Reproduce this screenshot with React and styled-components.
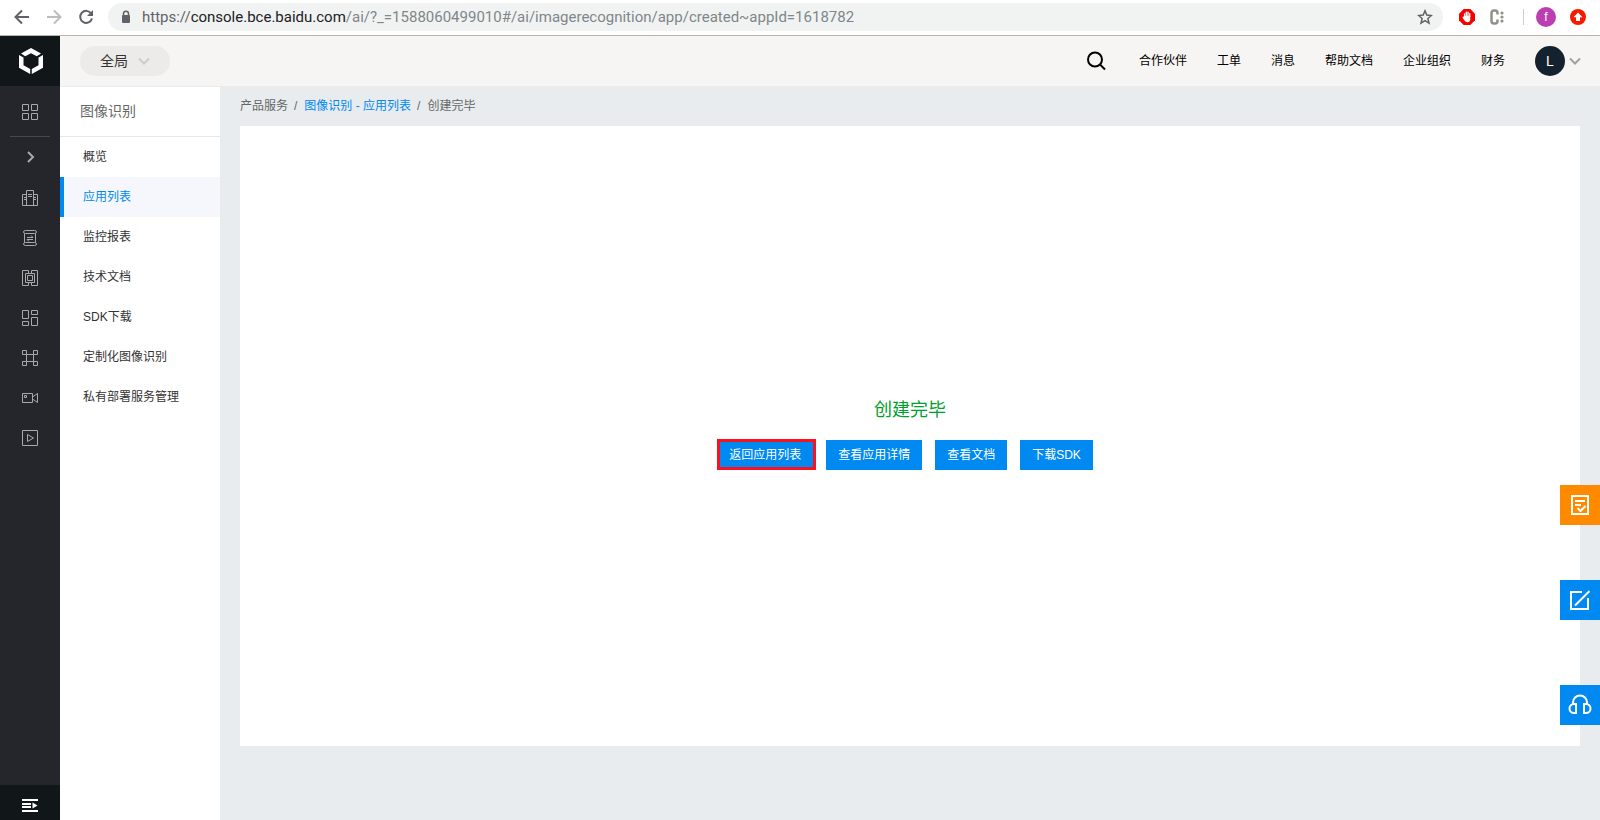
import React from "react";
import styled, { createGlobalStyle } from "styled-components";

const GlobalStyle = createGlobalStyle`
  *, *::before, *::after { box-sizing: border-box; }
  body {
    margin: 0;
    background: #e8ecef;
    color: #333;
    font-family: "Liberation Sans", "Noto Sans CJK SC", sans-serif;
    font-size: 12px;
    line-height: 20px;
  }
  button { font: inherit; border: 0; padding: 0; background: none; cursor: pointer; }
  a { color: inherit; text-decoration: none; }
  ul, ol { list-style: none; margin: 0; padding: 0; }
  svg { display: block; flex: none; }
`;

const Page = styled.div`
  display: flex;
  flex-direction: column;
  min-height: 100vh;
`;

/* Browser chrome */
const BrowserBar = styled.div`
  display: flex;
  align-items: center;
  height: 36px;
  padding: 0 14px 2px;
  background: #fff;
  border-bottom: 1px solid #bab4ae;
`;

const BrowserButtons = styled.div`
  display: flex;
  gap: 16px;
  margin-right: 14px;
`;

const IconButton = styled.button`
  display: flex;
  align-items: center;
  justify-content: center;
  width: ${(p) => p.$size || 16}px;
  height: ${(p) => p.$size || 16}px;
`;

const AddressBar = styled.div`
  flex: 1;
  display: flex;
  align-items: center;
  gap: 10px;
  height: 28px;
  padding: 0 10px 0 12px;
  border-radius: 14px;
  background: #f1f3f2;
`;

const Address = styled.span`
  flex: 1;
  font-family: Roboto, "Open Sans", sans-serif;
  font-size: 15px;
  color: #80868b;
  white-space: nowrap;
  b { font-weight: 400; color: #202124; }
  i { font-style: normal; color: #5f6368; }
`;

const Extensions = styled.div`
  display: flex;
  align-items: center;
  gap: 14px;
  margin-left: 16px;
`;

const ExtDivider = styled.span`
  width: 1px;
  height: 16px;
  margin: 0 -2px 0 4px;
  background: #cfcfcf;
`;

const Profile = styled.button`
  && {
    width: 20px;
    height: 20px;
    border-radius: 50%;
    background: #bc3fb2;
    color: #fff;
    font-size: 12px;
  }
`;

/* Console */
const Console = styled.div`
  flex: 1;
  display: flex;
`;

const Rail = styled.nav`
  flex: none;
  display: flex;
  flex-direction: column;
  width: 60px;
  background: #25262c;
  color: #a9a9ab;
`;

const Logo = styled.a`
  display: flex;
  align-items: center;
  justify-content: center;
  height: 50px;
  padding-left: 2px;
  background: #111618;
  color: #fff;
`;

const RailTop = styled.div`
  display: flex;
  justify-content: center;
  height: 51px;
  margin: 0 10px;
  border-bottom: 1px solid #46474c;
`;

const RailButton = styled.button`
  display: flex;
  align-items: center;
  justify-content: center;
  width: 100%;
  height: 40px;
  padding-top: 2px;
  color: inherit;
  ${RailTop} & { height: 50px; }
`;

const RailToggle = styled(RailButton)`
  height: 35px;
  margin-top: auto;
  padding-top: 4px;
  background: #111618;
  color: #fff;
`;

const Body = styled.div`
  flex: 1;
  display: flex;
  flex-direction: column;
  min-width: 0;
`;

const Header = styled.header`
  display: flex;
  align-items: center;
  height: 50px;
  padding: 0 19px 0 20px;
  background: #f6f5f3;
`;

const RegionButton = styled.button`
  && {
    display: flex;
    align-items: center;
    justify-content: space-between;
    width: 90px;
    height: 30px;
    padding: 0 20px;
    border-radius: 15px;
    background: #ecebe9;
    color: #333;
    font-size: 14px;
  }
`;

const SearchButton = styled(IconButton)`
  margin-right: 3px;
`;

const HeaderNav = styled.nav`
  display: flex;
  align-items: center;
  gap: 30px;
  margin-left: auto;
  color: #000;
`;

const Account = styled.button`
  && {
    display: flex;
    align-items: center;
    gap: 4px;
  }
`;

const Avatar = styled.span`
  width: 30px;
  height: 30px;
  border-radius: 50%;
  background: #13222e;
  color: #fff;
  font-size: 14px;
  line-height: 30px;
  text-align: center;
`;

const Content = styled.div`
  flex: 1;
  display: flex;
`;

const Sidebar = styled.aside`
  flex: none;
  width: 160px;
  background: #fff;
  border-top: 1px solid #e8ecef;
`;

const SidebarTitle = styled.h2`
  margin: 0;
  height: 50px;
  padding: 0 20px;
  border-bottom: 1px solid #e8e9eb;
  color: #666;
  font-size: 14px;
  font-weight: 400;
  line-height: 48px;
`;

const SidebarLink = styled.a`
  display: block;
  padding-left: 19px;
  border-left: 4px solid ${(p) => (p.$active ? "#0089f0" : "transparent")};
  background: ${(p) => (p.$active ? "#f5f7fc" : "transparent")};
  color: ${(p) => (p.$active ? "#0089f0" : "#333")};
  line-height: 40px;
`;

const Main = styled.main`
  flex: 1;
  min-width: 0;
  padding: 0 20px 20px;
`;

const Breadcrumb = styled.ol`
  display: flex;
  align-items: center;
  height: 40px;
  color: #666;
  li + li::before { content: "/"; margin: 0 7px 0 6px; }
  a { color: #0089f0; }
`;

const Card = styled.section`
  display: flex;
  flex-direction: column;
  align-items: center;
  justify-content: center;
  min-height: 620px;
  padding-bottom: 8px;
  background: #fff;
`;

const ResultTitle = styled.h1`
  margin: 0 0 15px;
  color: #00a02c;
  font-size: 18px;
  font-weight: 400;
  line-height: 30px;
`;

const Actions = styled.div`
  display: flex;
  gap: 13px;
  padding-right: 10px;
`;

const ActionButton = styled.button`
  && {
    position: relative;
    height: 30px;
    padding: 0 12px;
    background: #0089f0;
    color: #fff;
  }
  ${(p) =>
    p.$marked &&
    `&::after {
      content: "";
      position: absolute;
      inset: -1px -3px 0 0;
      border: 3px solid #fb1220;
    }`}
`;

const FloatingTools = styled.div`
  position: fixed;
  right: 0;
  bottom: 95px;
  display: flex;
  flex-direction: column;
`;

const FloatingButton = styled.button`
  && {
    display: flex;
    align-items: center;
    justify-content: center;
    width: 40px;
    height: 40px;
    background: ${(p) => (p.$warm ? "#ff8a00" : "#0089f0")};
    color: #fff;
  }
  & + & { margin-top: 65px; }
  &:first-child { margin-bottom: -10px; }
`;

function Line({ children, size = 16, width = 1, ...rest }) {
  return (
    <svg
      width={size}
      height={size}
      viewBox={`0 0 ${size} ${size}`}
      fill="none"
      stroke="currentColor"
      strokeWidth={width}
      aria-hidden="true"
      {...rest}
    >
      {children}
    </svg>
  );
}

const Chevron = ({ color }) => (
  <Line size={12} width={2} stroke={color}>
    <path d="M1 3.500l5 5 5-5" />
  </Line>
);

const railItems = [
  ["计算", "M4.500 15.500V.5h7v15M4.500 4.500h-4v11h15v-11h-4M6 4.500h4M6 6.500h4M2 7.500h2M2 9.500h2M12 7.500h2M12 9.500h2"],
  ["存储", "M3.500 .5h9q2 0 2 1.500t-2 1.500h-9q-2 0-2-1.500t2-1.500zM3.500 12.500h9q2 0 2 1.500t-2 1.500h-9q-2 0-2-1.500t2-1.500zM2.500 3.500v9M13.500 3.500v9M5 7.500h6L9 5.500M11 9.500H5l2 2"],
  ["网络", "M6.500 3.500v-3h-6v15h6v-3M9.500 3.500v-3h6v15h-6v-3M3.500 3.500h9v9h-9zM5.500 5.500h5v5h-5z"],
  ["应用", "M.5 .5h6v8h-6zM9.500 .5h6v4h-6zM.5 11.500h6v4h-6zM9.500 7.500h6v8h-6z"],
  ["数据", "M.5 .5h4v4h-4zM11.500 .5h4v4h-4zM.5 11.500h4v4h-4zM11.500 11.500h4v4h-4zM4.500 4.500v7M11.500 4.500v7M4.500 4.500h7M4.500 11.500h7"],
  ["视频", "M.5 3.500h10v9H.5zM10.500 7l5-3.500v9l-5-3.500M2.500 5.500h2v2h-2z"],
  ["播放", "M.5 .5h15v15H.5zM5.500 4.500v7l6-3.500z"],
];

const sideLinks = ["概览", "应用列表", "监控报表", "技术文档", "SDK下载", "定制化图像识别", "私有部署服务管理"];
const navLinks = ["合作伙伴", "工单", "消息", "帮助文档", "企业组织", "财务"];
const actions = ["返回应用列表", "查看应用详情", "查看文档", "下载SDK"];

function Browser() {
  return (
    <BrowserBar>
      <BrowserButtons>
        <IconButton aria-label="后退">
          <Line width={2} stroke="#5f6368"><path d="M15 8H2M8 1.500L1.500 8 8 14.500" /></Line>
        </IconButton>
        <IconButton aria-label="前进">
          <Line width={2} stroke="#bdbdb9"><path d="M1 8h13M8 1.500L14.500 8 8 14.500" /></Line>
        </IconButton>
        <IconButton aria-label="刷新">
          <Line width={2} stroke="#5f6368">
            <path d="M13.200 4.500A6 6 0 1 0 14 9.500" />
            <path d="M15 1v6H9z" fill="#5f6368" stroke="none" />
          </Line>
        </IconButton>
      </BrowserButtons>
      <AddressBar>
        <svg width="12" height="14" viewBox="0 0 12 14" aria-hidden="true">
          <path d="M3.500 6V3.700a2.500 2.500 0 0 1 5 0V6" fill="none" stroke="#5f6368" strokeWidth="1.500" />
          <rect x="2" y="5" width="8" height="8" rx="1" fill="#5f6368" />
        </svg>
        <Address>
          <i>https://</i><b>console.bce.baidu.com</b>/ai/?_=1588060499010#/ai/imagerecognition/app/created~appId=1618782
        </Address>
        <IconButton aria-label="收藏">
          <Line width={1.5} stroke="#5f6368">
            <path d="M8 1.800l1.800 4.300 4.600.4-3.500 3 1.100 4.600L8 11.600l-4 2.500 1.100-4.600-3.500-3 4.600-.4z" />
          </Line>
        </IconButton>
      </AddressBar>
      <Extensions>
        <IconButton aria-label="广告拦截">
          <svg width="16" height="16" viewBox="0 0 16 16" aria-hidden="true">
            <path d="M4.700 0h6.600L16 4.700v6.600L11.300 16H4.700L0 11.300V4.700z" fill="#f60000" />
            <path d="M5.600 8V4.800M7.300 7.500V3.200M9 7.500V3.200M10.700 7.500V4.600" stroke="#fff" strokeWidth="1.300" strokeLinecap="round" />
            <path d="M5 7h6.300v3.500Q11 13.300 8.500 13.300 6.500 13.300 5.500 11.500L3.300 8.600l.8-.6z" fill="#fff" />
          </svg>
        </IconButton>
        <IconButton aria-label="扩展程序">
          <svg width="16" height="16" viewBox="0 0 16 16" aria-hidden="true">
            <path d="M8.500 5.500V4a2.500 2.500 0 0 0-2.500-2.500H5A2.500 2.500 0 0 0 2.500 4v8A2.500 2.500 0 0 0 5 14.500h1A2.500 2.500 0 0 0 8.500 12v-1.500" fill="none" stroke="#92908a" strokeWidth="2.500" />
            <circle cx="13" cy="4" r="1.600" fill="#92908a" />
            <circle cx="13" cy="8" r="1.600" fill="#92908a" />
            <circle cx="13" cy="12" r="1.600" fill="#92908a" />
          </svg>
        </IconButton>
        <ExtDivider />
        <Profile>f</Profile>
        <IconButton aria-label="更新">
          <svg width="16" height="16" viewBox="0 0 16 16" aria-hidden="true">
            <circle cx="8" cy="8" r="8" fill="#f61b00" />
            <path d="M8 3.500l4.500 4.700H10V12H6V8.200H3.500z" fill="#fff" />
          </svg>
        </IconButton>
      </Extensions>
    </BrowserBar>
  );
}

export default function App() {
  return (
    <Page>
      <GlobalStyle />
      <Browser />
      <Console>
        <Rail aria-label="产品">
          <Logo href="#home" aria-label="首页">
            <svg width="24" height="26" viewBox="0 0 24 26" fill="currentColor" aria-hidden="true">
              <path d="M12 0l10 5.400-4.200 2.800L12 5.200 6.200 8.200 2 5.400z" />
              <path d="M0 7l4.500 2.600v7.600l6.700 3.800v5L0 19.800z" />
              <path d="M24 7l-4.500 2.600v7.600l-6.700 3.800v5L24 19.800z" />
            </svg>
          </Logo>
          <RailTop>
            <RailButton aria-label="全部产品">
              <Line><path d="M.5 .5h6v6h-6zM9.500 .5h6v6h-6zM.5 9.500h6v6h-6zM9.500 9.500h6v6h-6z" /></Line>
            </RailButton>
          </RailTop>
          <RailButton aria-label="展开">
            <Line width={2}><path d="M6 2l5 5-5 5" /></Line>
          </RailButton>
          {railItems.map(([label, d]) => (
            <RailButton key={label} aria-label={label}>
              <Line><path d={d} /></Line>
            </RailButton>
          ))}
          <RailToggle aria-label="展开菜单">
            <Line width={2}>
              <path d="M0 3h16M0 7h9M0 10h9M0 14h16" />
              <path d="M10.500 5.500v6l5-3z" fill="currentColor" stroke="none" />
            </Line>
          </RailToggle>
        </Rail>
        <Body>
          <Header>
            <RegionButton>
              全局
              <Chevron color="#cfcdca" />
            </RegionButton>
            <HeaderNav>
              <SearchButton aria-label="搜索" $size={20}>
                <Line size={20} width={2}>
                  <circle cx="9" cy="8.500" r="7" />
                  <path d="M14 13.500l5 5" />
                </Line>
              </SearchButton>
              {navLinks.map((t) => (
                <a key={t} href="#nav">{t}</a>
              ))}
              <Account aria-label="账户">
                <Avatar>L</Avatar>
                <Chevron color="#a3a19e" />
              </Account>
            </HeaderNav>
          </Header>
          <Content>
            <Sidebar>
              <SidebarTitle>图像识别</SidebarTitle>
              <ul>
                {sideLinks.map((t, i) => (
                  <li key={t}>
                    <SidebarLink href="#side" $active={i === 1}>{t}</SidebarLink>
                  </li>
                ))}
              </ul>
            </Sidebar>
            <Main>
              <Breadcrumb>
                <li>产品服务</li>
                <li><a href="#list">图像识别 - 应用列表</a></li>
                <li>创建完毕</li>
              </Breadcrumb>
              <Card>
                <ResultTitle>创建完毕</ResultTitle>
                <Actions>
                  {actions.map((t, i) => (
                    <ActionButton key={t} $marked={i === 0}>{t}</ActionButton>
                  ))}
                </Actions>
              </Card>
            </Main>
          </Content>
        </Body>
      </Console>
      <FloatingTools>
        <FloatingButton $warm aria-label="问卷">
          <Line size={20} width={2}>
            <path d="M2 1h16v18H2zM5 6h10M5 10h6M7.500 13l3 3 5-5" />
          </Line>
        </FloatingButton>
        <FloatingButton aria-label="反馈">
          <Line size={20} width={2}>
            <path d="M12 2H1v17h17V8M5 15.500L19.500 1" />
          </Line>
        </FloatingButton>
        <FloatingButton aria-label="客服">
          <Line size={24} width={2}>
            <path d="M5 11V9.500a7 7 0 0 1 14 0V11M8 11v9H6a4.500 4.500 0 0 1 0-9zM16 11v9h2a4.500 4.500 0 0 0 0-9z" />
          </Line>
        </FloatingButton>
      </FloatingTools>
    </Page>
  );
}
